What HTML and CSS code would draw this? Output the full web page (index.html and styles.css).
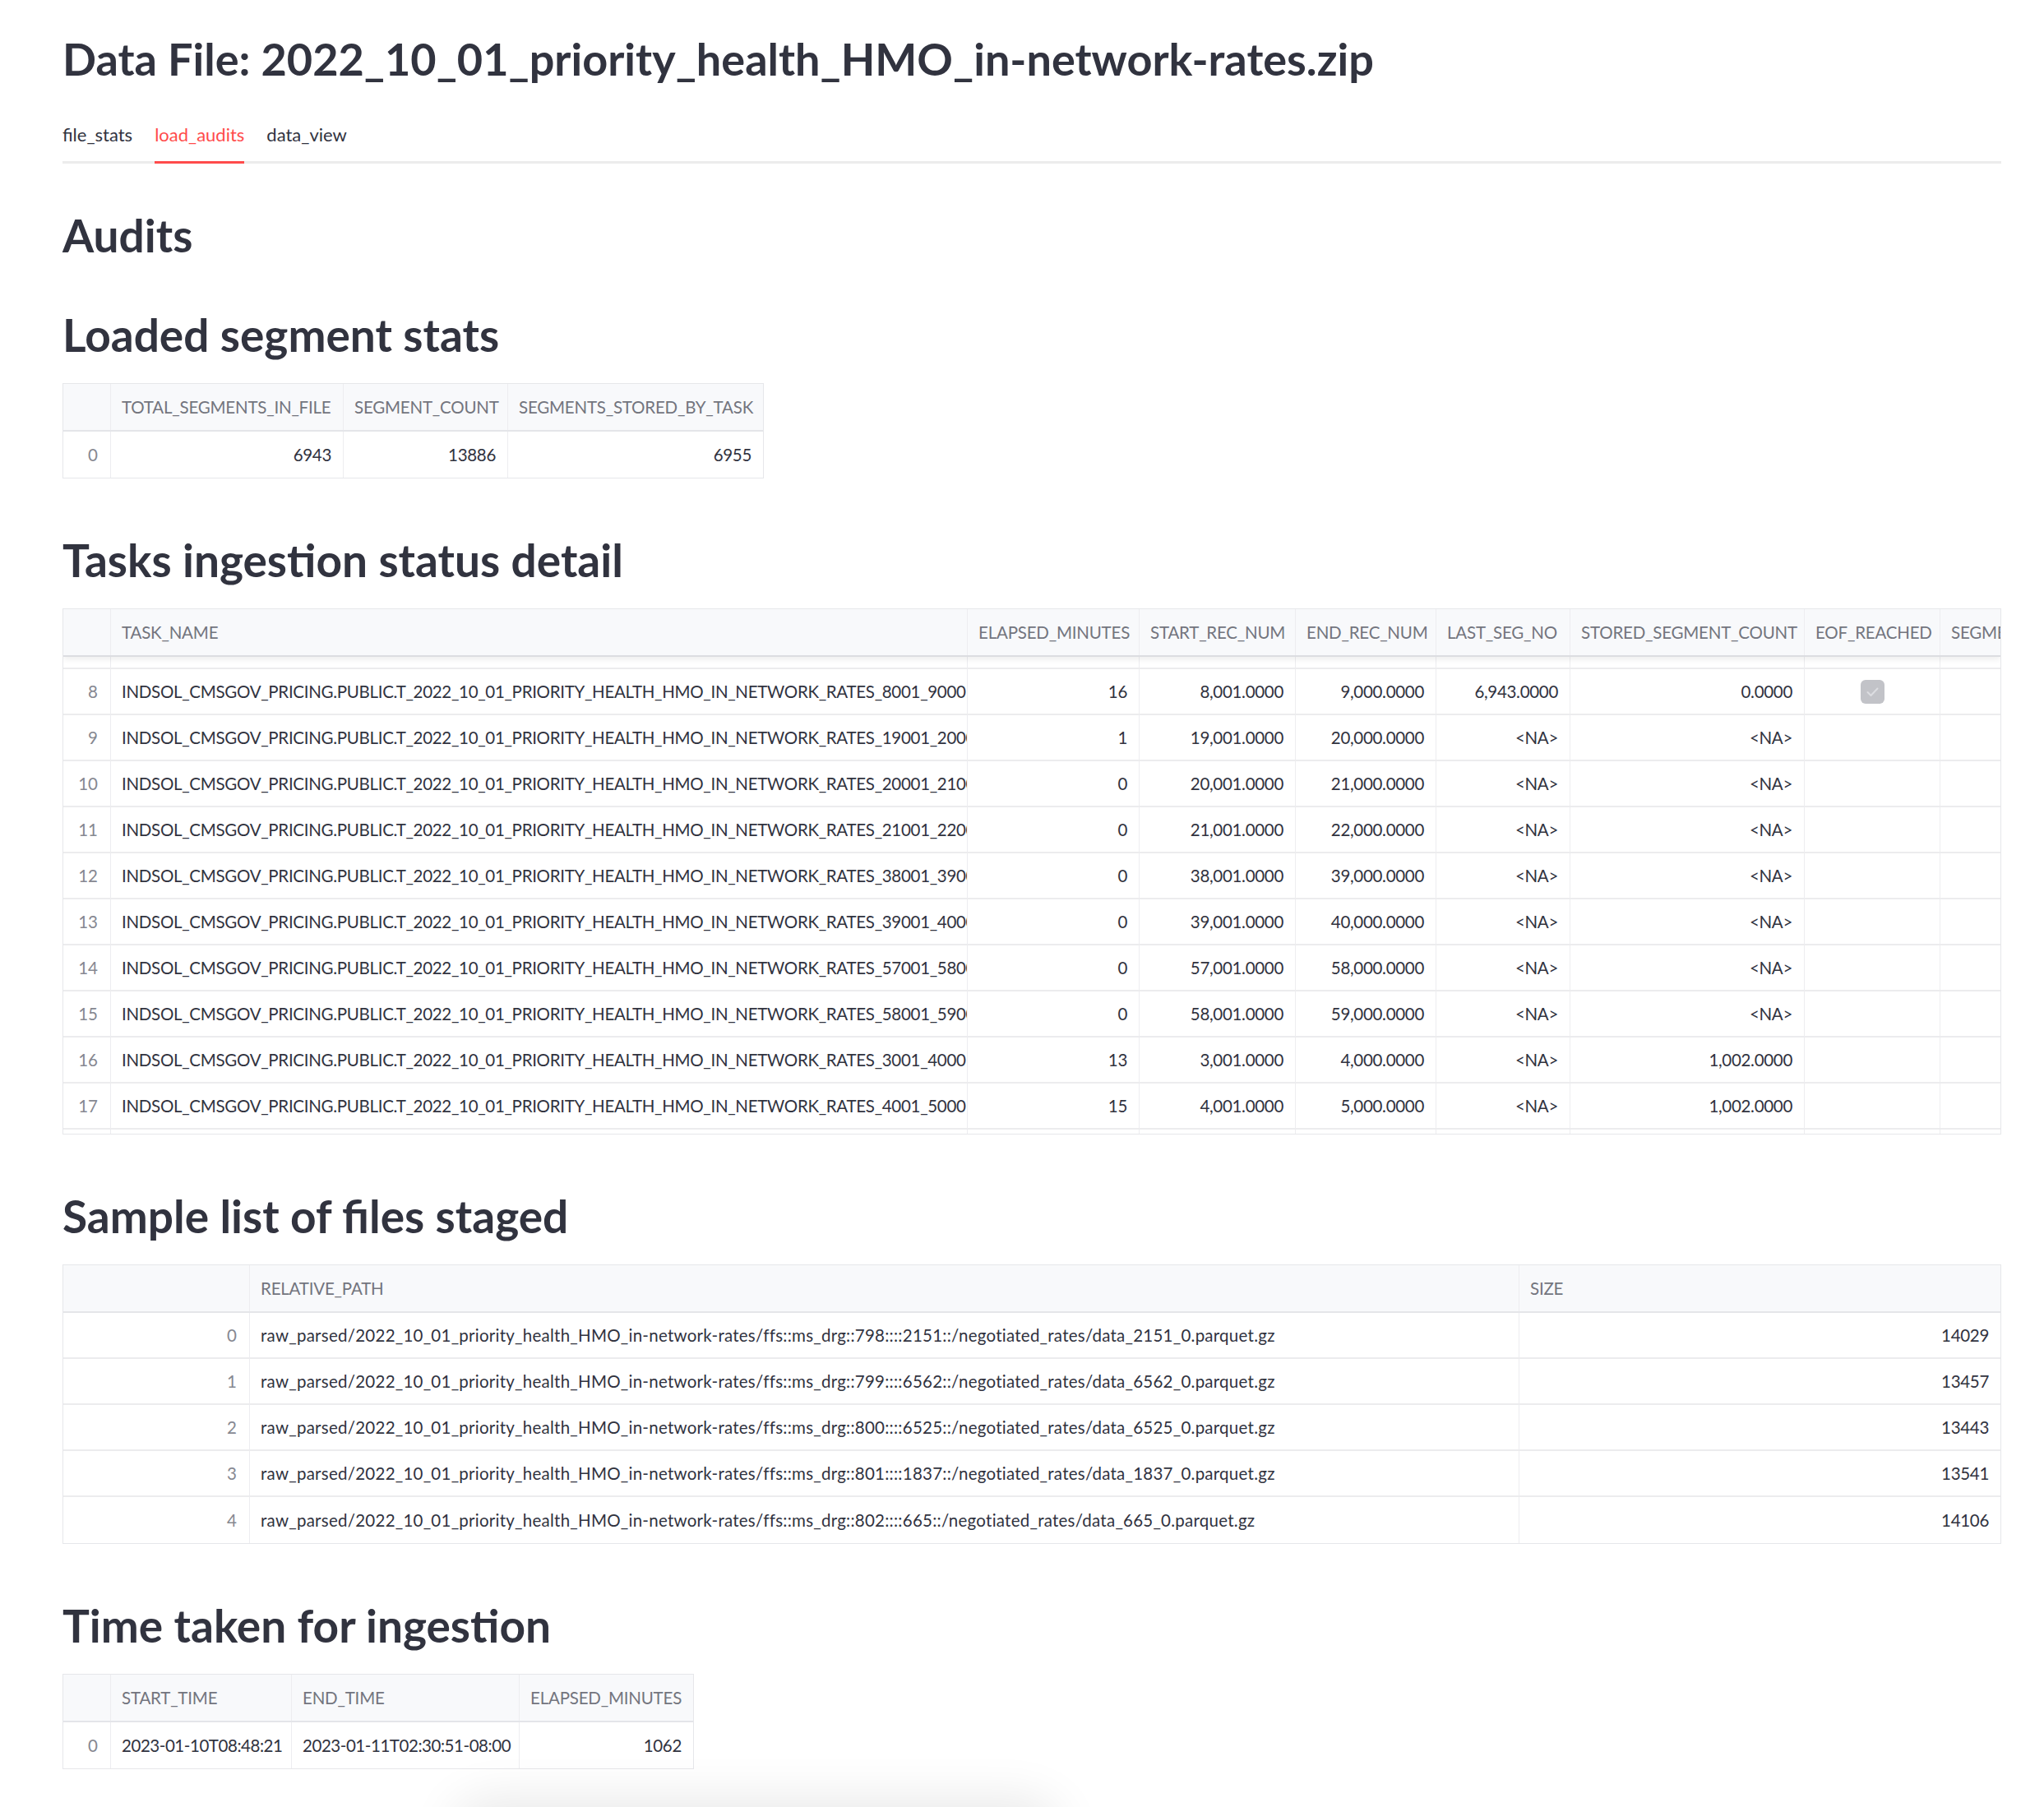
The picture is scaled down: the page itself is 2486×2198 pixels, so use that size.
FILE: index.html
```html
<!DOCTYPE html>
<html lang="en">
<head>
<meta charset="utf-8">
<title>Data File</title>
<link rel="stylesheet" href="styles.css">
</head>
<body>
<main class="page">
  <h1 class="hd title">Data File: 2022_10_01_priority_health_HMO_in-network-rates.zip</h1>
  <nav class="tabs">
    <span class="tab">file_stats</span>
    <span class="tab active">load_audits</span>
    <span class="tab">data_view</span>
  </nav>

  <h2 class="hd h-audits">Audits</h2>
  <h2 class="hd h-sub">Loaded segment stats</h2>
  <div class="grid g1">
    <div class="row head"><div class="c"></div><div class="c">TOTAL_SEGMENTS_IN_FILE</div><div class="c">SEGMENT_COUNT</div><div class="c">SEGMENTS_STORED_BY_TASK</div></div>
    <div class="row"><div class="c idx">0</div><div class="c num">6943</div><div class="c num">13886</div><div class="c num">6955</div></div>
  </div>

  <h2 class="hd sec">Tasks ingestion status detail</h2>
  <div class="grid g2">
    <div class="row head shadow"><div class="c"></div><div class="c">TASK_NAME</div><div class="c">ELAPSED_MINUTES</div><div class="c">START_REC_NUM</div><div class="c">END_REC_NUM</div><div class="c">LAST_SEG_NO</div><div class="c">STORED_SEGMENT_COUNT</div><div class="c">EOF_REACHED</div><div class="c">SEGMENTS_RECORDED</div></div>
    <div class="row part-top"><div class="c"></div><div class="c"></div><div class="c"></div><div class="c"></div><div class="c"></div><div class="c"></div><div class="c"></div><div class="c"></div><div class="c"></div></div>
    <div class="row"><div class="c idx">8</div><div class="c tn">INDSOL_CMSGOV_PRICING.PUBLIC.T_2022_10_01_PRIORITY_HEALTH_HMO_IN_NETWORK_RATES_8001_9000</div><div class="c num">16</div><div class="c num">8,001.0000</div><div class="c num">9,000.0000</div><div class="c num">6,943.0000</div><div class="c num">0.0000</div><div class="c mid"><span class="check"><svg width="29" height="29" viewBox="0 0 29 29"><polyline points="8.5,15 12.5,19 20.5,10.5" fill="none" stroke="#dcdde1" stroke-width="2" stroke-linecap="round" stroke-linejoin="round"/></svg></span></div><div class="c"></div></div>
    <div class="row"><div class="c idx">9</div><div class="c tn">INDSOL_CMSGOV_PRICING.PUBLIC.T_2022_10_01_PRIORITY_HEALTH_HMO_IN_NETWORK_RATES_19001_20000</div><div class="c num">1</div><div class="c num">19,001.0000</div><div class="c num">20,000.0000</div><div class="c num">&lt;NA&gt;</div><div class="c num">&lt;NA&gt;</div><div class="c"></div><div class="c"></div></div>
    <div class="row"><div class="c idx">10</div><div class="c tn">INDSOL_CMSGOV_PRICING.PUBLIC.T_2022_10_01_PRIORITY_HEALTH_HMO_IN_NETWORK_RATES_20001_21000</div><div class="c num">0</div><div class="c num">20,001.0000</div><div class="c num">21,000.0000</div><div class="c num">&lt;NA&gt;</div><div class="c num">&lt;NA&gt;</div><div class="c"></div><div class="c"></div></div>
    <div class="row"><div class="c idx">11</div><div class="c tn">INDSOL_CMSGOV_PRICING.PUBLIC.T_2022_10_01_PRIORITY_HEALTH_HMO_IN_NETWORK_RATES_21001_22000</div><div class="c num">0</div><div class="c num">21,001.0000</div><div class="c num">22,000.0000</div><div class="c num">&lt;NA&gt;</div><div class="c num">&lt;NA&gt;</div><div class="c"></div><div class="c"></div></div>
    <div class="row"><div class="c idx">12</div><div class="c tn">INDSOL_CMSGOV_PRICING.PUBLIC.T_2022_10_01_PRIORITY_HEALTH_HMO_IN_NETWORK_RATES_38001_39000</div><div class="c num">0</div><div class="c num">38,001.0000</div><div class="c num">39,000.0000</div><div class="c num">&lt;NA&gt;</div><div class="c num">&lt;NA&gt;</div><div class="c"></div><div class="c"></div></div>
    <div class="row"><div class="c idx">13</div><div class="c tn">INDSOL_CMSGOV_PRICING.PUBLIC.T_2022_10_01_PRIORITY_HEALTH_HMO_IN_NETWORK_RATES_39001_40000</div><div class="c num">0</div><div class="c num">39,001.0000</div><div class="c num">40,000.0000</div><div class="c num">&lt;NA&gt;</div><div class="c num">&lt;NA&gt;</div><div class="c"></div><div class="c"></div></div>
    <div class="row"><div class="c idx">14</div><div class="c tn">INDSOL_CMSGOV_PRICING.PUBLIC.T_2022_10_01_PRIORITY_HEALTH_HMO_IN_NETWORK_RATES_57001_58000</div><div class="c num">0</div><div class="c num">57,001.0000</div><div class="c num">58,000.0000</div><div class="c num">&lt;NA&gt;</div><div class="c num">&lt;NA&gt;</div><div class="c"></div><div class="c"></div></div>
    <div class="row"><div class="c idx">15</div><div class="c tn">INDSOL_CMSGOV_PRICING.PUBLIC.T_2022_10_01_PRIORITY_HEALTH_HMO_IN_NETWORK_RATES_58001_59000</div><div class="c num">0</div><div class="c num">58,001.0000</div><div class="c num">59,000.0000</div><div class="c num">&lt;NA&gt;</div><div class="c num">&lt;NA&gt;</div><div class="c"></div><div class="c"></div></div>
    <div class="row"><div class="c idx">16</div><div class="c tn">INDSOL_CMSGOV_PRICING.PUBLIC.T_2022_10_01_PRIORITY_HEALTH_HMO_IN_NETWORK_RATES_3001_4000</div><div class="c num">13</div><div class="c num">3,001.0000</div><div class="c num">4,000.0000</div><div class="c num">&lt;NA&gt;</div><div class="c num">1,002.0000</div><div class="c"></div><div class="c"></div></div>
    <div class="row"><div class="c idx">17</div><div class="c tn">INDSOL_CMSGOV_PRICING.PUBLIC.T_2022_10_01_PRIORITY_HEALTH_HMO_IN_NETWORK_RATES_4001_5000</div><div class="c num">15</div><div class="c num">4,001.0000</div><div class="c num">5,000.0000</div><div class="c num">&lt;NA&gt;</div><div class="c num">1,002.0000</div><div class="c"></div><div class="c"></div></div>
    <div class="row part-bottom"><div class="c"></div><div class="c"></div><div class="c"></div><div class="c"></div><div class="c"></div><div class="c"></div><div class="c"></div><div class="c"></div><div class="c"></div></div>
  </div>

  <h2 class="hd sec">Sample list of files staged</h2>
  <div class="grid g3">
    <div class="row head"><div class="c"></div><div class="c">RELATIVE_PATH</div><div class="c">SIZE</div></div>
    <div class="row"><div class="c idx">0</div><div class="c path">raw_parsed/2022_10_01_priority_health_HMO_in-network-rates/ffs::ms_drg::798::::2151::/negotiated_rates/data_2151_0.parquet.gz</div><div class="c num">14029</div></div>
    <div class="row"><div class="c idx">1</div><div class="c path">raw_parsed/2022_10_01_priority_health_HMO_in-network-rates/ffs::ms_drg::799::::6562::/negotiated_rates/data_6562_0.parquet.gz</div><div class="c num">13457</div></div>
    <div class="row"><div class="c idx">2</div><div class="c path">raw_parsed/2022_10_01_priority_health_HMO_in-network-rates/ffs::ms_drg::800::::6525::/negotiated_rates/data_6525_0.parquet.gz</div><div class="c num">13443</div></div>
    <div class="row"><div class="c idx">3</div><div class="c path">raw_parsed/2022_10_01_priority_health_HMO_in-network-rates/ffs::ms_drg::801::::1837::/negotiated_rates/data_1837_0.parquet.gz</div><div class="c num">13541</div></div>
    <div class="row"><div class="c idx">4</div><div class="c path">raw_parsed/2022_10_01_priority_health_HMO_in-network-rates/ffs::ms_drg::802::::665::/negotiated_rates/data_665_0.parquet.gz</div><div class="c num">14106</div></div>
  </div>

  <h2 class="hd sec">Time taken for ingestion</h2>
  <div class="grid g4">
    <div class="row head"><div class="c"></div><div class="c">START_TIME</div><div class="c">END_TIME</div><div class="c">ELAPSED_MINUTES</div></div>
    <div class="row"><div class="c idx">0</div><div class="c dt">2023-01-10T08:48:21</div><div class="c dt">2023-01-11T02:30:51-08:00</div><div class="c num">1062</div></div>
  </div>
</main>
<div class="bottom-glow"></div>
</body>
</html>
```

FILE: styles.css
```css
* { box-sizing: border-box; }
html, body { margin: 0; padding: 0; background: #ffffff; }
body {
  font-family: Lato, "Noto Sans", "DejaVu Sans", sans-serif;
  color: #31333f;
  overflow: hidden;
}
.page { padding: 40px 52px 0 76px; }

.hd {
  margin: 0;
  font-size: 55px;
  line-height: 64px;
  font-weight: 700;
  color: #31333f;
  white-space: nowrap;
}
.hd.title { font-size: 54px; }

.tabs {
  display: flex;
  gap: 27px;
  margin-top: 44px;
  border-bottom: 3px solid #ececec;
}
.tab {
  font-size: 22px;
  line-height: 32px;
  padding-bottom: 16px;
  color: #31333f;
}
.tab.active {
  color: #ff4b4b;
  border-bottom: 3px solid #ff4b4b;
  margin-bottom: -3px;
}

.h-audits { margin-top: 55px; }
.h-sub { margin-top: 57px; }
.sec { margin-top: 67px; }

.grid {
  margin-top: 27px;
  border: 1px solid #e6e7ea;
  overflow: hidden;
  font-size: 20.5px;
  color: #31333f;
}
.g1 { --cols: 58px 283px 200px 310px; width: 853px; }
.g2 { --cols: 58px 1042px 209px 190px 171px 163px 285px 165px 260px; width: 2358px; }
.g3 { --cols: 227px 1544px 585px; width: 2358px; }
.g4 { --cols: 58px 220px 277px 211px; width: 768px; }

.row {
  display: grid;
  grid-template-columns: var(--cols);
  height: 56px;
  border-bottom: 2px solid #ececee;
}
.row:last-child { border-bottom: none; }
.row.head {
  height: 58px;
  background: #f8f9fb;
  color: #73757e;
  letter-spacing: -0.2px;
  border-bottom: 2px solid #e4e5e9;
}
.row.head.shadow {
  position: relative;
  z-index: 1;
  border-bottom-color: #dcdde1;
  box-shadow: 0 3px 7px rgba(0, 0, 0, 0.07);
}
.row.part-top { height: 15px; }
.row.part-bottom { height: 5px; }

.c {
  display: flex;
  align-items: center;
  padding: 0 13px;
  border-right: 1px solid #ededf0;
  overflow: hidden;
  white-space: nowrap;
  min-width: 0;
}
.c:last-child { border-right: none; }
.num { justify-content: flex-end; padding-right: 14px; letter-spacing: -0.3px; }
.idx { justify-content: flex-end; padding-right: 15px; color: #868891; }
.mid { justify-content: center; }
.tn { letter-spacing: -0.3px; }
.path { letter-spacing: 0.25px; }
.dt { letter-spacing: -0.45px; }

.check {
  display: block;
  width: 29px;
  height: 29px;
  border-radius: 6px;
  background: #c2c3c8;
}
.check svg { display: block; }

.bottom-glow {
  position: fixed;
  left: 560px;
  bottom: -70px;
  width: 720px;
  height: 70px;
  border-radius: 40px;
  background: #ffffff;
  box-shadow: 0 0 60px 10px rgba(0, 0, 0, 0.09);
}
```
